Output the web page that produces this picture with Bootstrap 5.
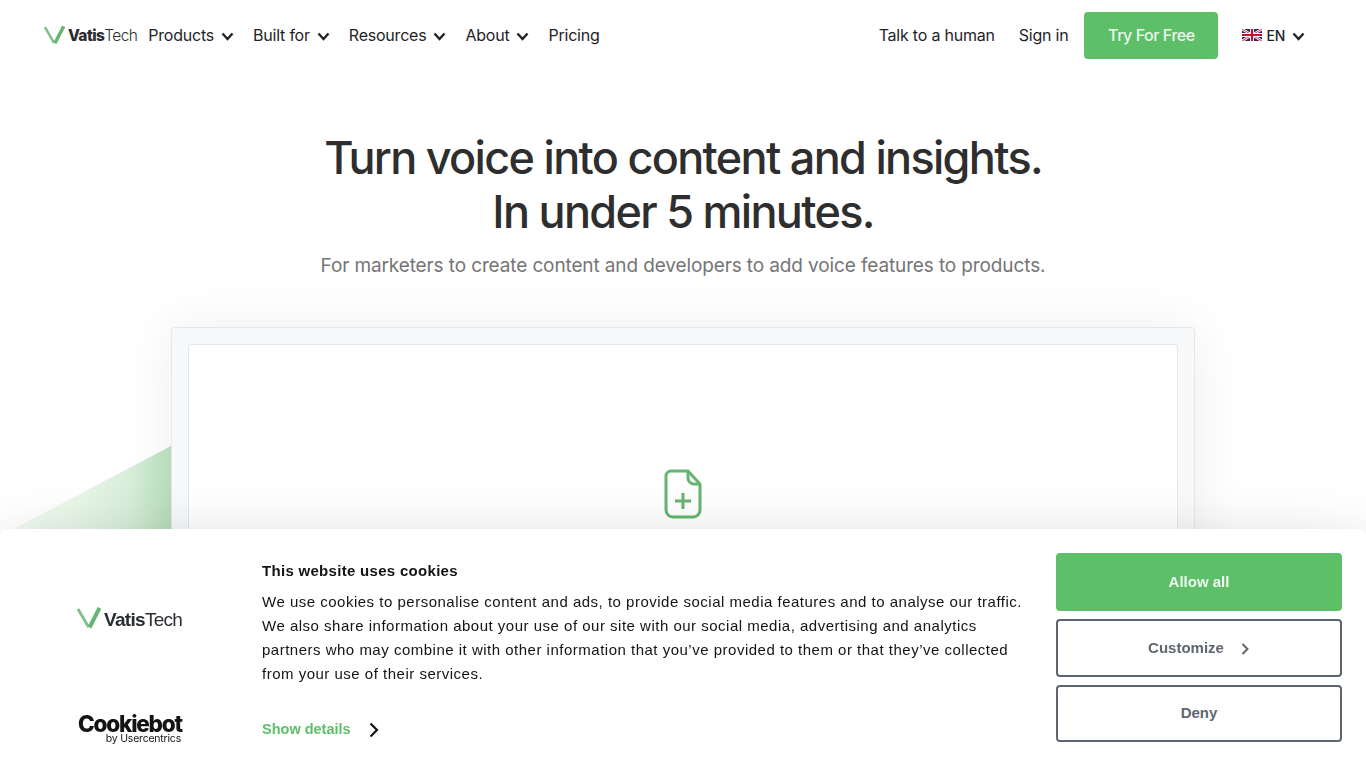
<!DOCTYPE html>
<html lang="en">
<head>
    <meta charset="UTF-8">
    <meta name="viewport" content="width=device-width, initial-scale=1.0">
    <title>Vatis Tech</title>
    <link href="https://cdn.jsdelivr.net/npm/bootstrap@5.3.0/dist/css/bootstrap.min.css" rel="stylesheet">
    <style>
        html, body {
            height: 100%;
            overflow: hidden;
        }
        body {
            font-family: Inter, "Liberation Sans", sans-serif;
            color: #1f2328;
            background: #fff;
        }
        .top-bar {
            height: 70px;
            padding: 0 61px 0 44px;
        }
        .top-link {
            color: #1f2328;
            font-size: 16px;
            letter-spacing: -.22px;
            text-decoration: none;
            white-space: nowrap;
        }
        .nav-gap {
            margin-left: 19px;
        }
        .chev {
            width: 13px;
            height: 9px;
            margin-left: 7px;
            margin-top: 3px;
        }
        .brand-link {
            margin-right: 11px;
        }
        .brand-mark {
            width: 21px;
            height: 20px;
            margin-right: 3px;
        }
        .brand-word {
            font-size: 15.5px;
            letter-spacing: -0.6px;
            color: #2a2d31;
            line-height: 1;
            margin-top: 3px;
        }
        .brand-word b {
            font-weight: 800;
        }
        .brand-word span {
            font-weight: 300;
        }
        .btn-try {
            background: #5dbf68;
            color: #eaf7ec;
            border: 0;
            border-radius: 4px;
            width: 134px;
            height: 47px;
            margin-left: 16px;
            font-size: 16px;
            font-weight: 500;
            letter-spacing: -.45px;
        }
        .sign-link {
            margin-left: 24px;
        }
        .lang-link {
            margin-left: 24px;
            font-size: 14px;
            font-weight: 500;
        }
        .hero-title {
            font-size: 45px;
            line-height: 54px;
            font-weight: 500;
            letter-spacing: -1.7px;
            color: #2e2e2e;
            margin: 61px 0 0;
        }
        .hero-sub {
            font-size: 19px;
            line-height: 28px;
            letter-spacing: -.12px;
            color: #757575;
            margin: 13px 0 0;
        }
        .deco-wedge {
            position: absolute;
            left: 0;
            top: 446px;
            width: 171px;
            height: 90px;
            clip-path: polygon(0 90px, 171px 0, 171px 90px);
            background: linear-gradient(90deg, #f4fbf4 0%, #e8f6e8 45%, #d8eeda 75%, #b5dcb9 100%);
        }
        .upload-shell {
            position: relative;
            width: 1024px;
            height: 441px;
            margin: 47px auto 0;
            padding: 16px;
            background: #f8f9fb;
            border: 1px solid #e6e8ec;
            border-radius: 4px 4px 0 0;
            border-bottom: 0;
            box-shadow: 0 0 55px rgba(0, 0, 0, .07);
        }
        .upload-inner {
            height: 100%;
            background: #fff;
            border: 1px solid #e4e7ec;
            border-bottom: 0;
            border-radius: 3px 3px 0 0;
            padding-top: 124px;
        }
        .cookie-bar {
            position: fixed;
            left: 0;
            right: 0;
            bottom: 0;
            height: 239px;
            background: #fff;
            border-radius: 8px 8px 0 0;
            box-shadow: 0 30px 70px rgba(0, 0, 0, .3);
            font-family: "Liberation Sans", Arial, sans-serif;
            color: #141414;
        }
        .cookie-logos {
            width: 262px;
            padding: 78px 0 0 77px;
        }
        .cookie-logos .brand-mark {
            width: 24px;
            height: 22px;
            margin-right: 3px;
        }
        .cookie-logos .brand-word {
            font-size: 19px;
            letter-spacing: -0.7px;
            margin-top: 3px;
        }
        .cb-name {
            font-family: Inter, sans-serif;
            font-weight: 800;
            font-size: 22.5px;
            line-height: 18px;
            letter-spacing: -1.2px;
            color: #141414;
            margin: 86px 0 0 1px;
        }
        .cb-by {
            font-family: Inter, sans-serif;
            font-size: 10.5px;
            line-height: 10px;
            letter-spacing: -0.2px;
            color: #141414;
            text-align: right;
            width: 104px;
            margin-top: 1px;
        }
        .cookie-text {
            width: 770px;
            padding-top: 33px;
        }
        .cookie-text h2 {
            font-size: 15px;
            line-height: 18px;
            font-weight: 700;
            letter-spacing: .3px;
            margin: 0 0 10px;
            color: #141414;
        }
        .cookie-text p {
            font-size: 15px;
            line-height: 24px;
            letter-spacing: .5px;
            margin: 0;
        }
        .show-row {
            margin-top: 33px;
        }
        .show-more {
            font-size: 14.5px;
            font-weight: 700;
            color: #5dbf68;
            text-decoration: none;
        }
        .show-chev {
            margin-left: 18px;
        }
        .cookie-btns {
            width: 286px;
            margin-left: auto;
            margin-right: 24px;
            padding-top: 24px;
        }
        .btn-cookie {
            height: 58px;
            font-size: 15px;
            font-weight: 700;
            font-family: "Liberation Sans", Arial, sans-serif;
            border-radius: 4px;
            border: 2px solid #5f6670;
            background: #fff;
            color: #5f6670;
        }
        .btn-cookie.allow {
            background: #5dbf68;
            border-color: #5dbf68;
            color: #eef9ef;
        }
        .btn-cookie.deny {
            height: 57px;
        }
        .btn-chev {
            margin-left: 17px;
            margin-top: 1px;
        }
    </style>
</head>
<body>
    <nav class="top-bar d-flex align-items-center">
        <a class="brand-link d-flex align-items-start text-decoration-none" href="#">
            <svg class="brand-mark" viewBox="0 0 24 22">
                <path d="M1 2 11.500 20" stroke="#7cc086" stroke-width="2.800" fill="none"/>
                <path d="M22.500 1 12.500 20.500" stroke="#67b574" stroke-width="4" fill="none"/>
            </svg>
            <span class="brand-word"><b>Vatis</b><span>Tech</span></span>
        </a>
        <a class="top-link d-flex align-items-center" href="#">Products
            <svg class="chev" viewBox="0 0 13 9"><path d="M1.500 1.500 6.500 7l5-5.500" stroke="#1f2328" stroke-width="2.400" fill="none"/></svg></a>
        <a class="top-link nav-gap d-flex align-items-center" href="#">Built for
            <svg class="chev" viewBox="0 0 13 9"><path d="M1.500 1.500 6.500 7l5-5.500" stroke="#1f2328" stroke-width="2.400" fill="none"/></svg></a>
        <a class="top-link nav-gap d-flex align-items-center" href="#">Resources
            <svg class="chev" viewBox="0 0 13 9"><path d="M1.500 1.500 6.500 7l5-5.500" stroke="#1f2328" stroke-width="2.400" fill="none"/></svg></a>
        <a class="top-link nav-gap d-flex align-items-center" href="#">About
            <svg class="chev" viewBox="0 0 13 9"><path d="M1.500 1.500 6.500 7l5-5.500" stroke="#1f2328" stroke-width="2.400" fill="none"/></svg></a>
        <a class="top-link nav-gap" href="#">Pricing</a>

        <a class="top-link ms-auto" href="#">Talk to a human</a>
        <a class="top-link sign-link" href="#">Sign in</a>
        <button class="btn btn-try" type="button">Try For Free</button>
        <a class="top-link lang-link d-flex align-items-center" href="#">
            <svg width="20" height="12" viewBox="0 0 20 12" class="me-1">
                <rect width="20" height="12" fill="#2b2a5e"/>
                <path d="M0 0 20 12M20 0 0 12" stroke="#fff" stroke-width="2.400"/>
                <path d="M0 0 20 12M20 0 0 12" stroke="#c8102e" stroke-width=".8"/>
                <path d="M10 0v12M0 6h20" stroke="#fff" stroke-width="4"/>
                <path d="M10 0v12M0 6h20" stroke="#c8102e" stroke-width="2.200"/>
            </svg>EN
            <svg class="chev" viewBox="0 0 13 9"><path d="M1.500 1.500 6.500 7l5-5.500" stroke="#1f2328" stroke-width="2.400" fill="none"/></svg></a>
    </nav>

    <main>
        <div class="text-center">
            <h1 class="hero-title">Turn voice into content and insights.<br>In under 5 minutes.</h1>
            <p class="hero-sub">For marketers to create content and developers to add voice features to products.</p>
        </div>
        <div class="upload-shell">
            <div class="upload-inner text-center">
                <svg width="38" height="50" viewBox="0 0 38 50">
                    <path d="M7 2h17l12 13v26a7 7 0 0 1-7 7H9a7 7 0 0 1-7-7V7a5 5 0 0 1 5-5z" fill="none" stroke="#63b56f" stroke-width="3"/>
                    <path d="M24 2v7a6 6 0 0 0 6 6h6" fill="none" stroke="#63b56f" stroke-width="3"/>
                    <path d="M19 24v16M11 32h16" stroke="#63b56f" stroke-width="3"/>
                </svg>
            </div>
        </div>
    </main>
    <div class="deco-wedge"></div>

    <section class="cookie-bar d-flex">
        <div class="cookie-logos flex-shrink-0">
            <div class="d-flex align-items-start">
                <svg class="brand-mark" viewBox="0 0 24 22">
                    <path d="M1 2 11.500 20" stroke="#7cc086" stroke-width="2.800" fill="none"/>
                    <path d="M22.500 1 12.500 20.500" stroke="#67b574" stroke-width="4" fill="none"/>
                </svg>
                <span class="brand-word"><b>Vatis</b><span>Tech</span></span>
            </div>
            <div class="cb-name">Cookiebot</div>
            <div class="cb-by">by Usercentrics</div>
        </div>
        <div class="cookie-text flex-shrink-0">
            <h2>This website uses cookies</h2>
            <p>We use cookies to personalise content and ads, to provide social media features and to analyse our traffic. We also share information about your use of our site with our social media, advertising and analytics partners who may combine it with other information that you’ve provided to them or that they’ve collected from your use of their services.</p>
            <div class="show-row d-flex align-items-center">
                <a class="show-more" href="#">Show details</a>
                <svg class="show-chev" width="10" height="16" viewBox="0 0 10 16"><path d="M1.500 1.500 8 8l-6.500 6.500" stroke="#141414" stroke-width="2.200" fill="none"/></svg>
            </div>
        </div>
        <div class="cookie-btns d-flex flex-column gap-2">
            <button class="btn btn-cookie allow" type="button">Allow all</button>
            <button class="btn btn-cookie d-flex align-items-center justify-content-center" type="button">Customize
                <svg class="btn-chev" width="9" height="12" viewBox="0 0 9 12"><path d="M1.500 1 6.500 6l-5 5" stroke="#5f6670" stroke-width="2" fill="none"/></svg></button>
            <button class="btn btn-cookie deny" type="button">Deny</button>
        </div>
    </section>

    <script src="https://cdn.jsdelivr.net/npm/bootstrap@5.3.0/dist/js/bootstrap.bundle.min.js"></script>
</body>
</html>
